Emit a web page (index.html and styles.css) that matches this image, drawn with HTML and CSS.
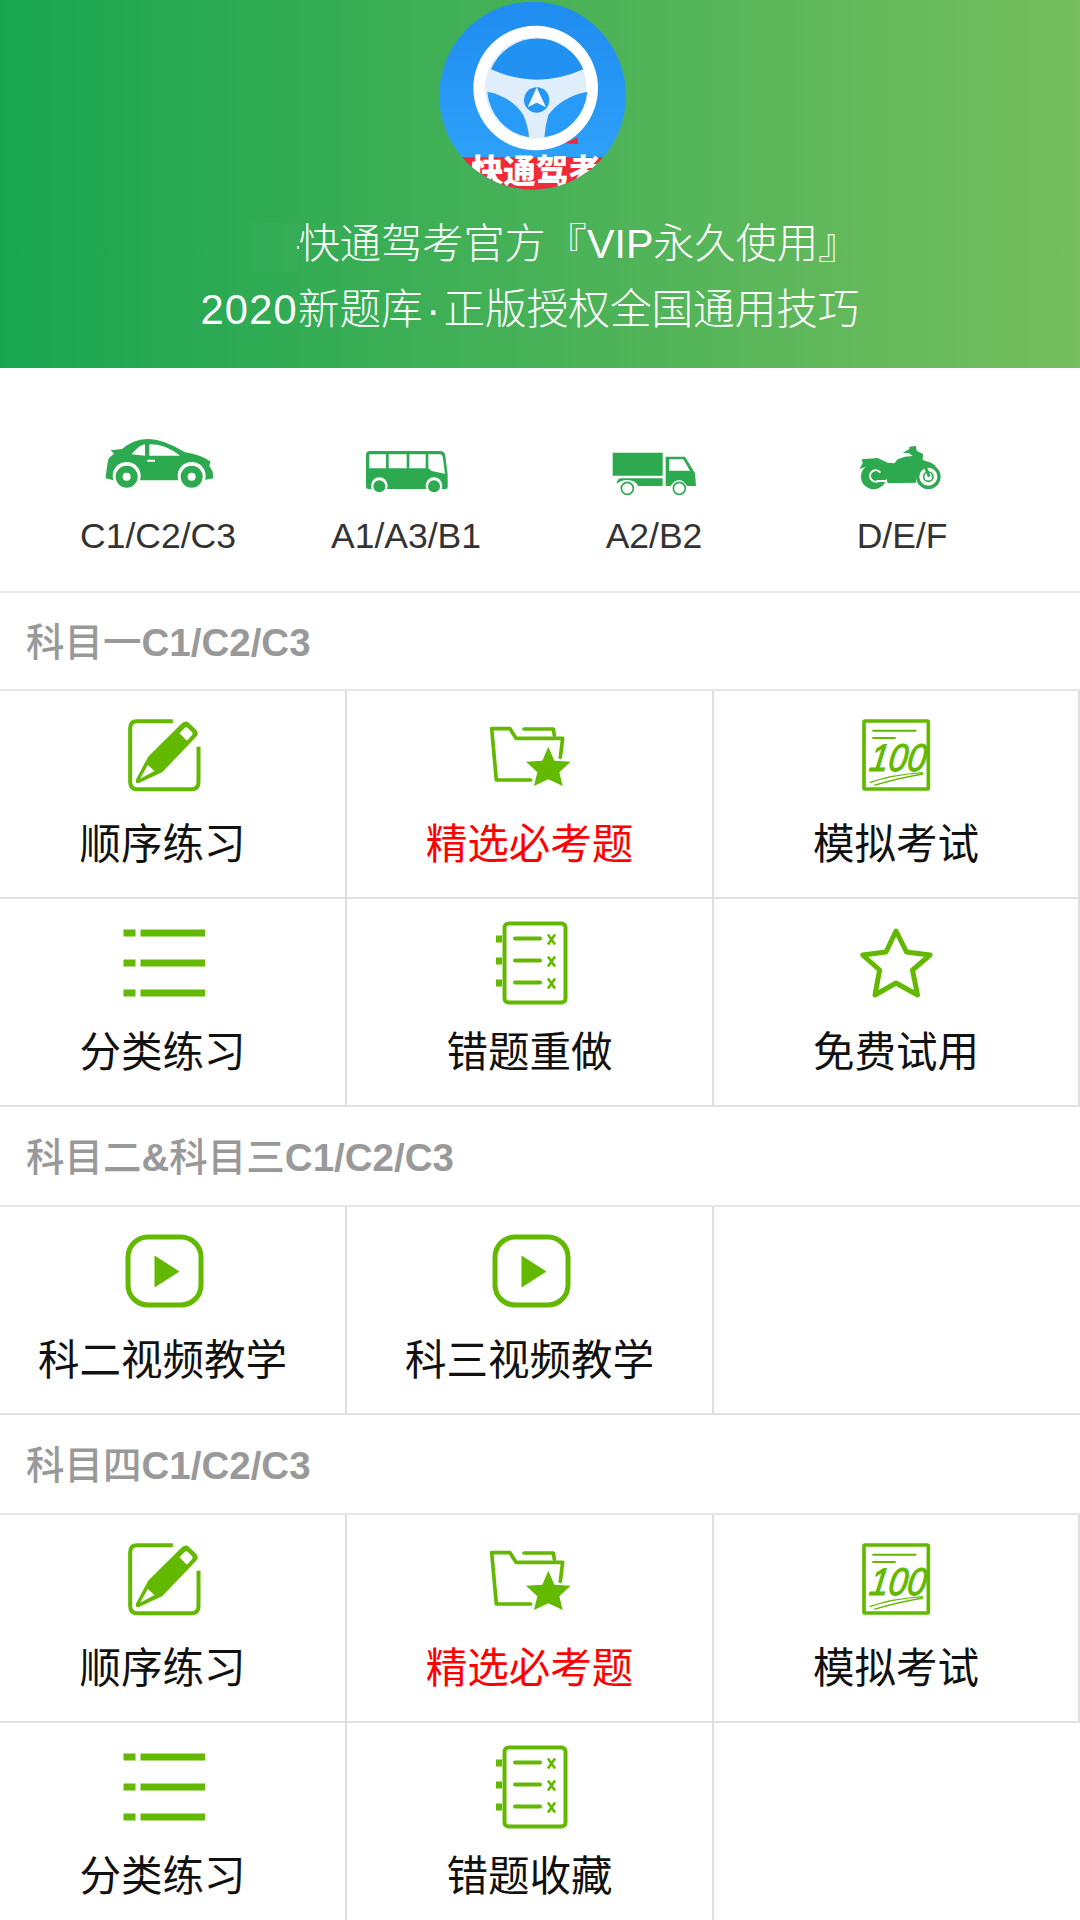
FILE: index.html
```html
<!DOCTYPE html>
<html lang="zh-CN">
<head>
    <meta charset="UTF-8">
    <meta name="viewport" content="width=device-width, initial-scale=1.0">
    <title>快通驾考</title>
    <link rel="stylesheet" href="styles.css">
</head>
<body>

    <!-- shared icons, every symbol is drawn for an 84px square -->
    <svg class="sprites" xmlns="http://www.w3.org/2000/svg">
        <symbol id="i-pencil" viewBox="64.5 39 252 252">
            <path d="M220 64H112Q92 64 92 85V246Q92 268 114 268H275Q297 268 297 246V140" fill="none" stroke="#62b900" stroke-width="12"/>
            <path d="M146 170L247 70Q258 60 268 68L290 90Q300 100 290 110L188 217L118 249Q106 252 110 238Z" fill="#62b900"/>
            <path d="M122 236L145 195L165 213Z" fill="#fff"/>
            <path d="M240 100L256 83Q260 80 264 83L278 97Q281 101 278 105L262 122Z" fill="#fff"/>
        </symbol>
        <symbol id="i-folder" viewBox="84 39 252 252">
            <path d="M212 240H109L95 86H150L168 115H308L301 172" fill="none" stroke="#62b900" stroke-width="11" stroke-linejoin="round" stroke-linecap="round"/>
            <path d="M192 87H280L283 106" fill="none" stroke="#62b900" stroke-width="11" stroke-linecap="round" stroke-linejoin="round"/>
            <path d="M265 140L283 182L332 185L298 217L308 258L265 238L222 258L232 217L198 185L247 182Z" fill="#62b900"/>
        </symbol>
        <symbol id="i-score" viewBox="1185 39 252 252">
            <rect x="1215" y="63" width="193" height="204" rx="4" fill="none" stroke="#62b900" stroke-width="11"/>
            <path d="M1240 92H1372M1240 114H1310" stroke="#62b900" stroke-width="6"/>
            <text class="score-num" transform="translate(1228 214) skewX(-8)" textLength="170" lengthAdjust="spacingAndGlyphs">100</text>
            <path d="M1232 248Q1300 224 1392 218M1245 256Q1320 234 1392 222" fill="none" stroke="#62b900" stroke-width="4"/>
        </symbol>
        <symbol id="i-list" viewBox="-2.5 -8.5 84 84">
            <path d="M0 0H12V7H0ZM17 0H82V7H17ZM0 30H12V37H0ZM17 30H82V37H17ZM0 60H12V67H0ZM17 60H82V67H17Z" fill="#62b900"/>
        </symbol>
        <symbol id="i-notes" viewBox="-8 -0.5 84 84">
            <rect x="8.5" y="2" width="61" height="79" rx="4" fill="none" stroke="#62b900" stroke-width="4"/>
            <path d="M0 14H6V21H0ZM0 36H6V43H0ZM0 58H6V65H0Z" fill="#62b900"/>
            <path d="M19 17H44M19 39H44M19 61H44" stroke="#62b900" stroke-width="4" stroke-linecap="round"/>
            <path d="M52 13L59 23M59 13L52 23M52 35L59 45M59 35L52 45M52 57L59 67M59 57L52 67" stroke="#62b900" stroke-width="2.6"/>
        </symbol>
        <symbol id="i-star" viewBox="855 921 84 84">
            <path d="M897 931L907.5 952L931 955L913.5 970L918.5 995L897 983L876 995L880.6 970L863.6 955L887 952Z" fill="none" stroke="#62b900" stroke-width="5" stroke-linejoin="round"/>
        </symbol>
        <symbol id="i-play" viewBox="-4.5 -5.5 84 84">
            <rect x="2.5" y="2.5" width="73" height="68" rx="20" fill="none" stroke="#62b900" stroke-width="5"/>
            <path d="M29 21V53L54 37Z" fill="#62b900"/>
        </symbol>
    </svg>

    <header class="banner">
        <svg class="logo" viewBox="0 0 600 600" xmlns="http://www.w3.org/2000/svg">
            <defs>
                <linearGradient id="logoBlue" x1="0" y1="0" x2="0" y2="1">
                    <stop offset="0" stop-color="#1f8cf0"/>
                    <stop offset="1" stop-color="#31a6fc"/>
                </linearGradient>
                <clipPath id="logoClip">
                    <path d="M30 5H587V570H30Z"/>
                </clipPath>
                <clipPath id="logoRound">
                    <ellipse cx="308" cy="287" rx="280" ry="282"/>
                </clipPath>
            </defs>
            <g clip-path="url(#logoClip)">
                <g clip-path="url(#logoRound)">
                    <rect width="600" height="600" fill="url(#logoBlue)"/>
                    <path d="M405 430L442 412L445 432Z" fill="#ee2b36"/>
                    <path d="M60 472H560V600H60Z" fill="#ee2b36"/>
                    <circle cx="317" cy="264" r="187" fill="#fff"/>
                    <circle cx="317" cy="264" r="152" fill="#e0edfb"/>
                    <path d="M183 208A150 150 0 0 1 460 208Q320 270 183 208Z" fill="#2192f2"/>
                    <path d="M172 275Q245 290 280 345Q295 380 297 412A150 150 0 0 1 172 275Z" fill="#279bf7"/>
                    <path d="M472 275Q395 290 355 345Q345 380 343 412A150 150 0 0 0 472 275Z" fill="#279bf7"/>
                    <circle cx="320" cy="300" r="38" fill="#2496f4"/>
                    <path d="M320 262L348 322L320 308L293 322Z" fill="#f1f7fd"/>
                    <text class="logo-name" x="122" y="548">快通驾考</text>
                </g>
            </g>
        </svg>
        <p class="banner-line banner-line-first"><span class="banner-gap"></span>快通驾考官方『VIP永久使用』</p>
        <p class="banner-line"><span class="year">2020</span>新题库<span class="dot">·</span>正版授权全国通用技巧</p>
    </header>

    <div class="licence-bar">
        <div class="licence">
            <svg class="licence-icon" viewBox="24 0 360 225">
                <path d="M47 155L52 118L56 100L72 86L62 76L96 72Q128 44 172 42Q222 42 285 82Q335 90 362 110L358 122L368 140L370 160L340 166H70L47 160Z" fill="#2daa50"/>
                <path d="M125 88Q145 62 165 58V92Z M178 58Q225 56 270 92L178 92Z M172 104H195V110H172Z" fill="#fff"/>
                <circle cx="110" cy="153" r="42" fill="#fff"/>
                <circle cx="305" cy="153" r="42" fill="#fff"/>
                <circle cx="110" cy="155" r="33" fill="#2daa50"/>
                <circle cx="305" cy="155" r="33" fill="#2daa50"/>
                <circle cx="110" cy="155" r="12" fill="#fff"/>
                <circle cx="305" cy="155" r="12" fill="#fff"/>
            </svg>
            <span>C1/C2/C3</span>
        </div>
        <div class="licence">
            <svg class="licence-icon" viewBox="768 0 360 225">
                <path d="M840 78H1050Q1064 78 1066 92L1073 150V185Q1073 192 1065 192H835Q828 192 828 185V90Q828 78 840 78Z" fill="#2daa50"/>
                <path d="M838 88H888V130H838Z M896 88H950V130H896Z M958 88H1007V130H958Z M1015 88H1050Q1057 88 1058 95L1065 146L1025 138L1015 130Z" fill="#fff"/>
                <circle cx="868" cy="182" r="25" fill="#fff"/>
                <circle cx="1032" cy="182" r="25" fill="#fff"/>
                <circle cx="868" cy="184" r="18" fill="#2daa50"/>
                <circle cx="1032" cy="184" r="18" fill="#2daa50"/>
            </svg>
            <span>A1/A3/B1</span>
        </div>
        <div class="licence">
            <svg class="licence-icon" viewBox="-18 -15 360 225">
                <path d="M38 68H188V137H38Z M66 145H188V168H115Q105 150 82 150Q62 150 50 162Q50 145 66 145Z M197 80H255L285 130L288 168H262Q250 150 238 150Q222 150 212 168H197Z" fill="#2daa50"/>
                <path d="M208 88H250L270 122H208Z" fill="#fff"/>
                <circle cx="82" cy="175" r="18" fill="#fff" stroke="#2daa50" stroke-width="5"/>
                <circle cx="238" cy="175" r="18" fill="#fff" stroke="#2daa50" stroke-width="5"/>
            </svg>
            <span>A2/B2</span>
        </div>
        <div class="licence">
            <svg class="licence-icon" viewBox="723 -15 360 225">
                <path d="M775 118L785 100L782 88L830 84L860 98L880 100L890 88L912 80L935 78L925 70L905 68L925 58L925 50L945 48L947 62L966 72L965 90L990 98L1005 108L985 112L975 108L985 140L975 145L945 135L945 158L860 160L850 125Q820 96 790 112Z" fill="#2daa50"/>
                <circle cx="818" cy="140" r="38" fill="#2daa50"/>
                <path d="M838 128A17 17 0 1 0 832 153H858" fill="none" stroke="#fff" stroke-width="6"/>
                <circle cx="982" cy="140" r="32" fill="#fff" stroke="#2daa50" stroke-width="10"/>
                <circle cx="982" cy="140" r="14" fill="none" stroke="#2daa50" stroke-width="5"/>
                <path d="M968 100L985 140" stroke="#2daa50" stroke-width="9"/>
            </svg>
            <span>D/E/F</span>
        </div>
    </div>

    <section>
        <h2 class="section-title">科目一<b>C1/C2/C3</b></h2>
        <div class="menu">
            <a class="cell"><svg class="cell-icon"><use href="#i-pencil"/></svg><span>顺序练习</span></a>
            <a class="cell"><svg class="cell-icon"><use href="#i-folder"/></svg><span class="hot">精选必考题</span></a>
            <a class="cell"><svg class="cell-icon"><use href="#i-score"/></svg><span>模拟考试</span></a>
            <a class="cell"><svg class="cell-icon"><use href="#i-list"/></svg><span>分类练习</span></a>
            <a class="cell"><svg class="cell-icon"><use href="#i-notes"/></svg><span>错题重做</span></a>
            <a class="cell"><svg class="cell-icon"><use href="#i-star"/></svg><span>免费试用</span></a>
        </div>
    </section>

    <section>
        <h2 class="section-title">科目二<b>&amp;</b>科目三<b>C1/C2/C3</b></h2>
        <div class="menu">
            <a class="cell"><svg class="cell-icon"><use href="#i-play"/></svg><span>科二视频教学</span></a>
            <a class="cell"><svg class="cell-icon"><use href="#i-play"/></svg><span>科三视频教学</span></a>
            <div class="cell cell-empty"></div>
        </div>
    </section>

    <section>
        <h2 class="section-title">科目四<b>C1/C2/C3</b></h2>
        <div class="menu">
            <a class="cell"><svg class="cell-icon"><use href="#i-pencil"/></svg><span>顺序练习</span></a>
            <a class="cell"><svg class="cell-icon"><use href="#i-folder"/></svg><span class="hot">精选必考题</span></a>
            <a class="cell"><svg class="cell-icon"><use href="#i-score"/></svg><span>模拟考试</span></a>
            <a class="cell"><svg class="cell-icon"><use href="#i-list"/></svg><span>分类练习</span></a>
            <a class="cell"><svg class="cell-icon"><use href="#i-notes"/></svg><span>错题收藏</span></a>
            <div class="cell cell-empty"></div>
        </div>
    </section>

</body>
</html>
```

FILE: styles.css
```css
/* page */
html, body {
    height: 1920px;
    overflow: hidden;
}

body {
    margin: 0;
    background: #fff;
    color: #111;
    font-family: "Liberation Sans", "Noto Sans CJK SC", sans-serif;
}

.sprites {
    display: none;
}

/* green banner */
.banner {
    height: 368px;
    box-sizing: border-box;
    padding-right: 20px;
    display: flex;
    flex-direction: column;
    align-items: center;
    background: linear-gradient(to right, #19a550, #76be5e);
}

.logo {
    width: 200px;
    height: 200px;
    margin-bottom: 12px;
}

.logo-name {
    font-family: "Noto Sans CJK SC", sans-serif;
    font-size: 98px;
    font-weight: 900;
    fill: #fff;
}

.banner-line {
    margin: 0;
    color: #fff;
    font-size: 41.6px;
    font-weight: 300;
    line-height: 65px;
    white-space: nowrap;
}

.banner-line-first {
    font-size: 41.2px;
}

/* left over patch in front of the first line */
.banner-gap {
    display: inline-block;
    width: 50px;
    height: 50px;
    margin-left: 48px;
    vertical-align: middle;
    background: linear-gradient(#fff, #fff) no-repeat 100% 50% / 2px 3px, rgba(255, 255, 255, 0.02);
}

.year {
    letter-spacing: 1.2px;
}

.dot {
    margin: 0 3.5px;
}

/* licence types */
.licence-bar {
    display: flex;
    padding: 57px 0 0 34px;
    height: 166px;
    border-bottom: 2px solid #e6e6e6;
}

.licence {
    width: 248px;
    display: flex;
    flex-direction: column;
    align-items: center;
    color: #333;
    font-size: 35.5px;
    line-height: 44px;
}

.licence-icon {
    width: 120px;
    height: 75px;
    margin-bottom: 14px;
}

/* menu sections */
.section-title {
    height: 100px;
    box-sizing: border-box;
    margin: 0 0 0 26px;
    border-bottom: 2px solid #e6e6e6;
    color: #999;
    font-size: 38.5px;
    font-weight: 500;
    line-height: 102px;
}

section:first-of-type .section-title {
    height: 98px;
    line-height: 100px;
}

.section-title b {
    font-weight: 700;
}

/* first column runs off the left edge of the screen */
.menu {
    display: grid;
    grid-template-columns: 367px 367px 366px;
    grid-auto-rows: 208px;
    margin: -2px 0 0 -20px;
    border-top: 2px solid #e6e6e6;
}

.cell {
    box-sizing: border-box;
    padding-top: 22px;
    display: flex;
    flex-direction: column;
    align-items: center;
    border-right: 2px solid #dedede;
    border-bottom: 2px solid #e2e2e2;
    font-size: 41.5px;
    line-height: 60px;
}

.cell-icon {
    width: 84px;
    height: 84px;
    margin-bottom: 18px;
}

.cell-empty {
    border-right: none;
}

.hot {
    color: #f00;
}

.score-num {
    font-family: "Liberation Sans", sans-serif;
    font-size: 116px;
    font-style: italic;
    font-weight: 400;
    fill: #62b900;
    stroke: #62b900;
    stroke-width: 3px;
}
```
